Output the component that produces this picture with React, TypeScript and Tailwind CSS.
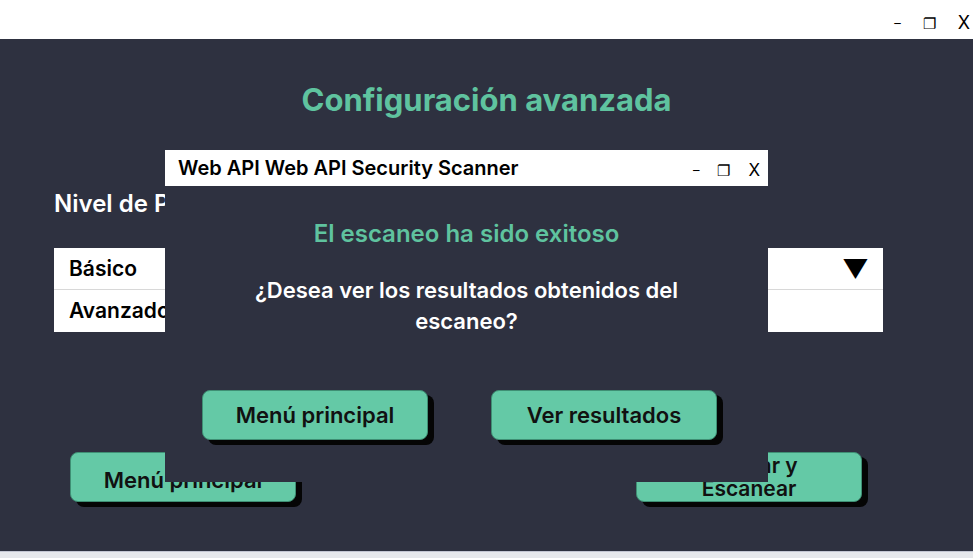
const font = { fontFamily: 'Inter, "Noto Sans", sans-serif' };

function WindowControls({ small }: { small?: boolean }) {
  return (
    <div className={`flex items-center text-black ${small ? 'gap-[18px] text-[17px]' : 'gap-[22px] text-[18px]'}`}>
      <span className="text-[13px] leading-none">–</span>
      <span className="text-[15px] leading-none">❐</span>
      <span className="leading-none">X</span>
    </div>
  );
}

function GreenButton({ label, className = '' }: { label: React.ReactNode; className?: string }) {
  return (
    <div
      className={`flex h-[50px] w-[226px] items-center justify-center rounded-[8px] border border-[#3f8f74] bg-[#64c9a6] text-[22px] font-semibold leading-[22px] text-[#111] shadow-[6px_5px_0_#050505] ${className}`}
    >
      {label}
    </div>
  );
}

export default function App() {
  return (
    <div className="relative flex h-[558px] w-[973px] flex-col overflow-hidden bg-[#2e3140]" style={font}>
      {/* top bar */}
      <div className="flex h-[39px] items-end justify-end bg-white pb-[7px] pr-[3px]">
        <WindowControls />
      </div>

      {/* page */}
      <div className="flex flex-1 flex-col px-[54px]">
        <h1 className="mt-[42px] text-center text-[31px] font-bold leading-[38px] text-[#5fc39f]">
          Configuración avanzada
        </h1>
        <div className="mt-[70px] text-[24px] font-semibold leading-[30px] text-white">Nivel de Profundidad</div>
        <div className="mt-[29px] flex w-[829px] flex-col bg-white text-[21px] font-semibold text-black">
          <div className="flex h-[42px] items-center justify-between border-b border-[#d8d8d8] pl-[15px] pr-[14px]">
            <span>Básico</span>
            <span className="text-[26px] leading-none">▼</span>
          </div>
          <div className="flex h-[42px] items-center pl-[15px]">Avanzado</div>
        </div>
        <div className="mt-[120px] flex justify-between pl-[16px] pr-[57px]">
          <GreenButton label={<span className="mt-[6px]">Menú principal</span>} />
          <GreenButton
            label={
              <div className="flex flex-col items-center text-[21px] leading-[23px]">
                <span>Mostrar y</span>
                <span>Escanear</span>
              </div>
            }
          />
        </div>
      </div>

      {/* bottom strip */}
      <div className="h-[7px] border-t border-[#c3c6d3] bg-[#e6e8ec]" />

      {/* modal */}
      <div className="absolute left-[165px] top-[150px] flex h-[332px] w-[603px] flex-col bg-[#2e3140]">
        <div className="flex h-[36px] items-center justify-between bg-white pl-[13px] pr-[8px]">
          <span className="text-[20px] font-semibold text-black">Web API Web API Security Scanner</span>
          <div className="mt-[4px]">
            <WindowControls small />
          </div>
        </div>
        <div className="flex flex-col items-center">
          <div className="mt-[33px] text-[24px] font-semibold leading-[30px] text-[#5fc39f]">El escaneo ha sido exitoso</div>
          <p className="mt-[26px] w-[480px] text-center text-[22px] font-semibold leading-[31px] text-white">
            ¿Desea ver los resultados obtenidos del escaneo?
          </p>
          <div className="mr-[14px] mt-[53px] flex gap-[63px]">
            <GreenButton label="Menú principal" />
            <GreenButton label="Ver resultados" />
          </div>
        </div>
      </div>
    </div>
  );
}
